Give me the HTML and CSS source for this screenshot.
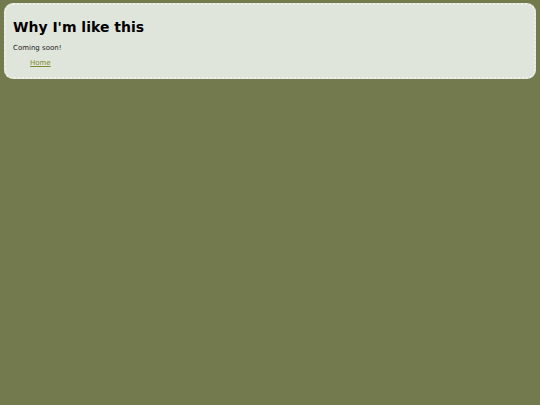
FILE: index.html
```html
<!DOCTYPE html>
<html>
<head>
<meta charset="utf-8">
<link rel="stylesheet" href="styles.css">
</head>
<body>
<div class="box">
<h1 class="title">Why I'm like this</h1>
<p class="text">Coming soon!</p>
<ul class="nav">
<li><a href="#" class="link">Home</a></li>
</ul>
</div>
</body>
</html>
```

FILE: styles.css
```css
html, body {
  margin: 0;
  padding: 0;
  background: #737b4e;
  height: 100%;
}
body {
  padding: 3px 4px;
  box-sizing: border-box;
  font-family: "DejaVu Sans", Verdana, sans-serif;
}
.box {
  background: #e0e5dc;
  border: 2px dotted #eef1ea;
  border-radius: 9px;
  padding: 9px 7px 9px 7px;
}
.title {
  margin: 5px 0 8px 0;
  font-size: 14px;
  font-weight: bold;
  color: #000;
  line-height: 17px;
}
.text {
  margin: 0 0 6px 0;
  font-size: 7px;
  line-height: 9px;
  color: #222;
}
.nav {
  margin: 0;
  padding: 0 0 0 17px;
  list-style: none;
  font-size: 7px;
  line-height: 9px;
}
.link {
  color: #7f8a30;
}
```
